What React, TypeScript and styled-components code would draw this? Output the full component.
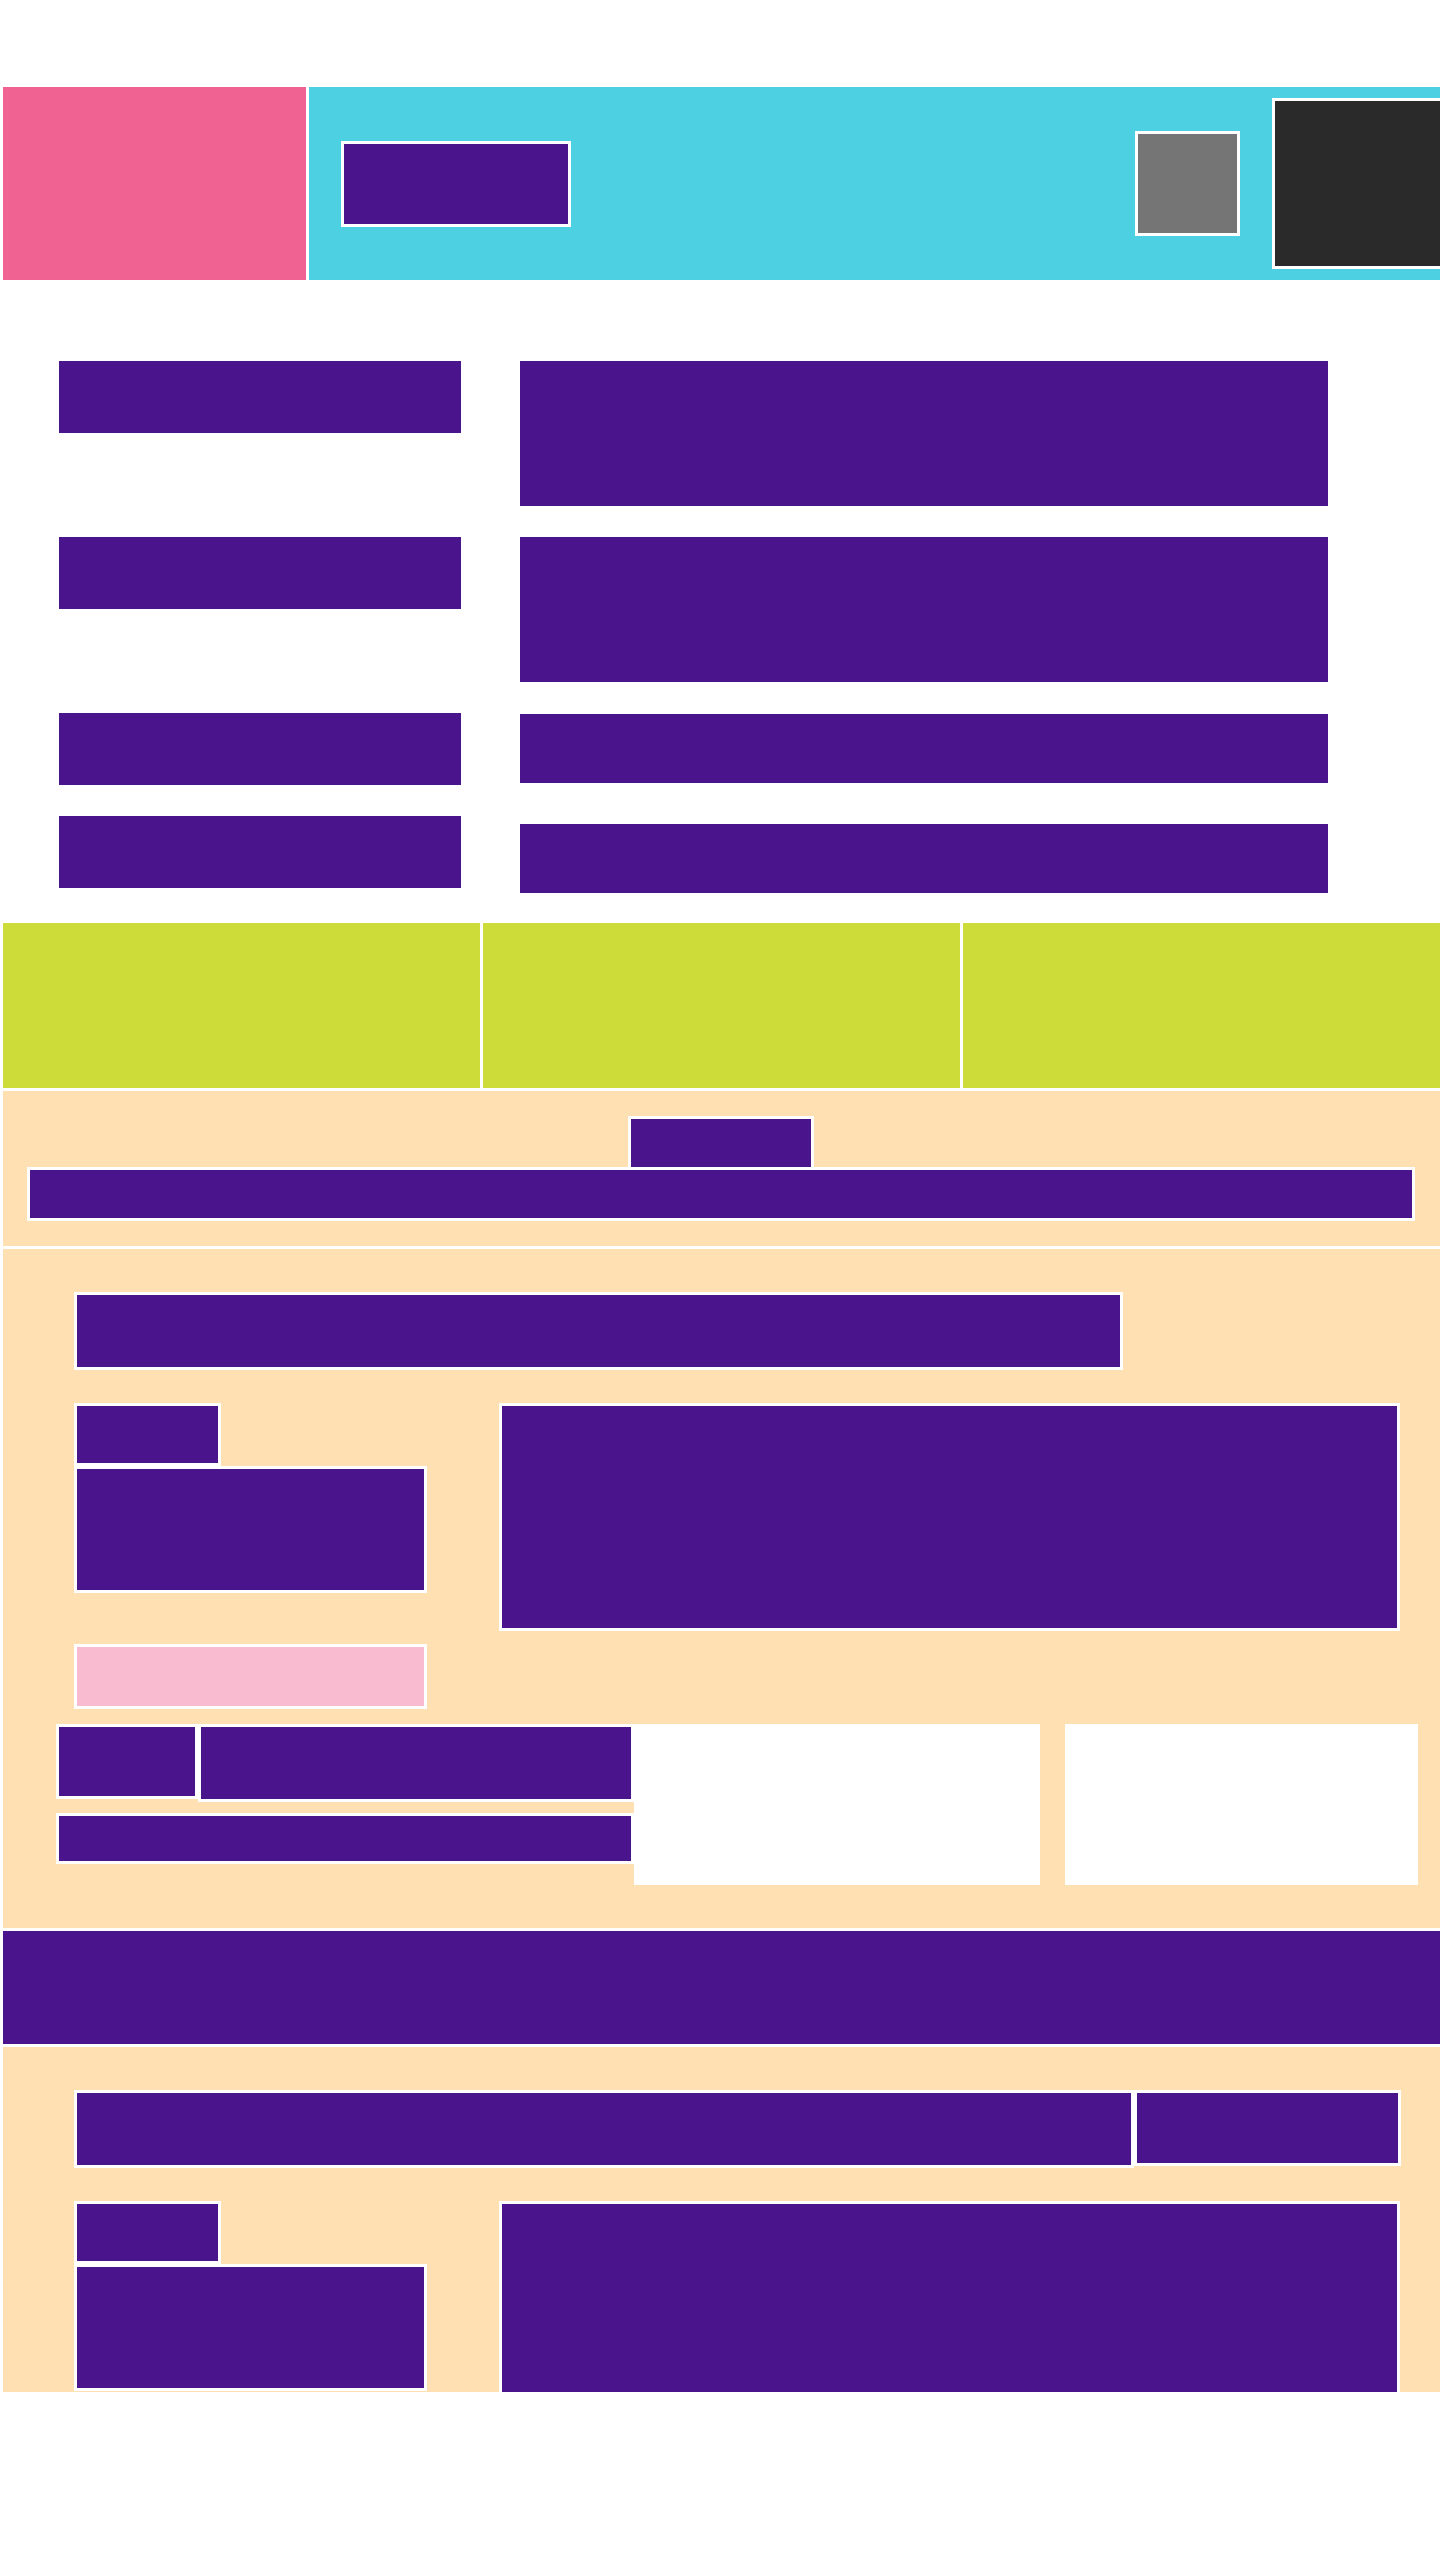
import styled, { createGlobalStyle } from 'styled-components'

const purple = '#4a148c'
const peach = '#ffe0b2'

const GlobalStyle = createGlobalStyle`
  * { box-sizing: border-box; }
  html, body {
    margin: 0;
    padding: 0;
    background: #fff;
    overflow-x: hidden;
  }
  body {
    font-family: 'Liberation Sans', Arial, sans-serif;
  }
`

const Page = styled.div`
  padding: 87px 0 0 3px;
`

const Header = styled.header`
  display: flex;
  gap: 3px;
  height: 193px;
`

const Brand = styled.div`
  width: 303px;
  flex-shrink: 0;
  background: #f06292;
`

const NavBar = styled.nav`
  flex: 1;
  min-width: 0;
  display: flex;
  align-items: center;
  padding-left: 32px;
  background: #4dd0e1;
  overflow: hidden;
`

const NavButton = styled.div`
  width: 230px;
  height: 86px;
  flex-shrink: 0;
  background: ${purple};
  border: 3px solid #fff;
`

const IconButton = styled.div`
  width: 105px;
  height: 105px;
  flex-shrink: 0;
  margin-left: auto;
  background: #757575;
  border: 3px solid #fff;
`

const Avatar = styled.div`
  width: 200px;
  height: 171px;
  flex-shrink: 0;
  margin-left: 32px;
  margin-right: -32px;
  background: #2a2a2a;
  border: 3px solid #fff;
`

const DetailList = styled.dl`
  display: grid;
  grid-template-columns: 402px 808px;
  column-gap: 59px;
  row-gap: 31px;
  align-items: start;
  margin: 81px 0 0;
  padding-left: 56px;
`

const Term = styled.dt`
  height: 72px;
  background: ${purple};
`

const Definition = styled.dd<{ $h: number; $offset?: number }>`
  margin: ${(p) => p.$offset ?? 0}px 0 0;
  height: ${(p) => p.$h}px;
  background: ${purple};
`

const Stack = styled.div`
  display: flex;
  flex-direction: column;
  gap: 3px;
  margin-top: 30px;
`

const Features = styled.section`
  display: grid;
  grid-template-columns: repeat(3, 1fr);
  gap: 3px;
  height: 165px;
`

const Feature = styled.div`
  background: #cddc39;
`

const TabSection = styled.section`
  display: flex;
  flex-direction: column;
  align-items: center;
  padding: 25px 25px 25px 24px;
  background: ${peach};
`

const Tab = styled.div`
  width: 186px;
  height: 51px;
  background: ${purple};
  border: 3px solid #fff;
  border-bottom: none;
`

const TabBar = styled.div`
  align-self: stretch;
  height: 54px;
  background: ${purple};
  border: 3px solid #fff;
`

const CardSection = styled.section<{ $clip?: number }>`
  padding: 43px 22px 43px 53px;
  background: ${peach};
  overflow: hidden;
  max-height: ${(p) => (p.$clip ? `${p.$clip}px` : 'none')};
`

const CardBody = styled.div`
  padding-left: 18px;
`

const TitleRow = styled.div`
  display: flex;
  align-items: flex-start;
`

const Box = styled.div<{ $w: number; $h: number; $bg?: string }>`
  width: ${(p) => p.$w}px;
  height: ${(p) => p.$h}px;
  flex-shrink: 0;
  background: ${(p) => p.$bg ?? purple};
  border: 3px solid #fff;
`

const MediaRow = styled.div`
  display: flex;
  gap: 72px;
  margin-top: 33px;
`

const MediaText = styled.div`
  display: flex;
  flex-direction: column;
  width: 353px;
`

const TagRow = styled.div`
  margin-top: 13px;
`

const MetaArea = styled.div`
  display: flex;
  margin-top: 15px;
`

const MetaGroup = styled.div`
  display: flex;
  flex-direction: column;
  gap: 11px;
  width: 578px;
`

const MetaLine = styled.div`
  display: flex;
  align-items: flex-start;
`

const Panel = styled.div<{ $w: number; $gap?: number }>`
  width: ${(p) => p.$w}px;
  height: 161px;
  margin-left: ${(p) => p.$gap ?? 0}px;
  background: #fff;
`

const Band = styled.div`
  height: 113px;
  background: ${purple};
`

function Card({ side, clip }: { side?: boolean; clip?: number }) {
  return (
    <CardSection $clip={clip}>
      <CardBody>
        <TitleRow>
          {side ? (
            <>
              <Box $w={1060} $h={78} />
              <Box $w={267} $h={76} />
            </>
          ) : (
            <Box $w={1049} $h={78} />
          )}
        </TitleRow>
        <MediaRow>
          <MediaText>
            <Box $w={147} $h={63} />
            <Box $w={353} $h={127} />
          </MediaText>
          <Box $w={901} $h={228} />
        </MediaRow>
        <TagRow>
          <Box $w={353} $h={65} $bg="#f8bbd0" />
        </TagRow>
      </CardBody>
      <MetaArea>
        <MetaGroup>
          <MetaLine>
            <Box $w={142} $h={75} />
            <Box $w={436} $h={78} />
          </MetaLine>
          <Box $w={578} $h={51} />
        </MetaGroup>
        <Panel $w={406} />
        <Panel $w={353} $gap={25} />
      </MetaArea>
    </CardSection>
  )
}

export default function App() {
  return (
    <Page>
      <GlobalStyle />
      <Header>
        <Brand />
        <NavBar>
          <NavButton />
          <IconButton />
          <Avatar />
        </NavBar>
      </Header>
      <DetailList>
        <Term />
        <Definition $h={145} />
        <Term />
        <Definition $h={145} />
        <Term />
        <Definition $h={69} $offset={1} />
        <Term />
        <Definition $h={69} $offset={8} />
      </DetailList>
      <Stack>
        <Features>
          <Feature />
          <Feature />
          <Feature />
        </Features>
        <TabSection>
          <Tab />
          <TabBar />
        </TabSection>
        <Card />
        <Band />
        <Card side clip={345} />
      </Stack>
    </Page>
  )
}
